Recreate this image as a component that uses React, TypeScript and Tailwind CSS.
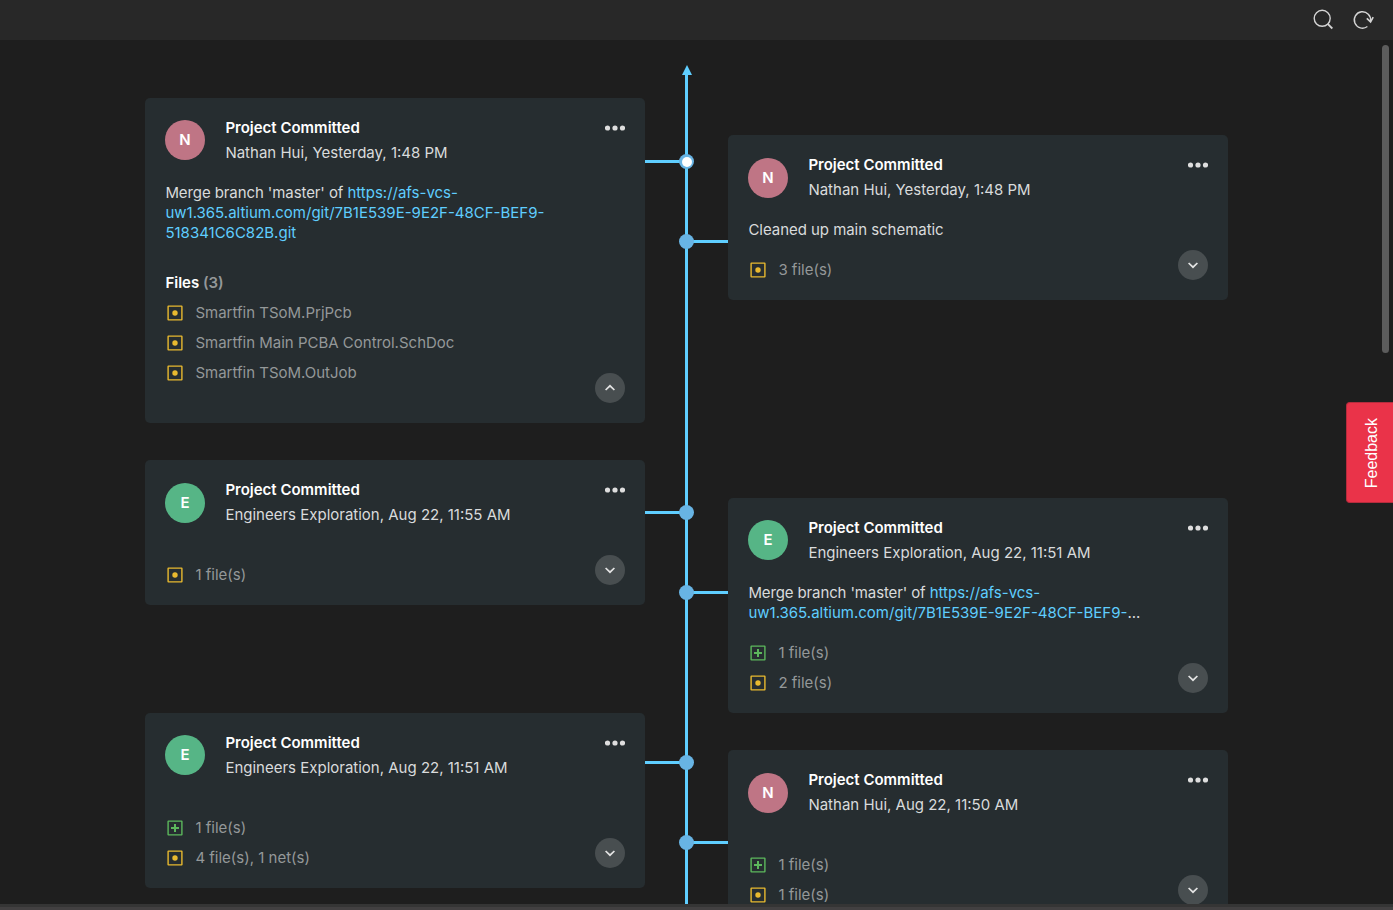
import React from "react";

type Change = { kind: "added" | "modified"; label: string };

type Commit = {
  initial: "N" | "E";
  by: string;
  message?: React.ReactNode;
  changes: Change[];
  expanded?: boolean;
  lowAvatar?: boolean;
};

const Link = ({ children }: { children: React.ReactNode }) => (
  <a className="tracking-normal text-[#5fceff]">{children}</a>
);

const ChangeIcon = ({ kind }: { kind: Change["kind"] }) => (
  <svg
    className={`size-5 shrink-0 ${kind === "added" ? "text-[#5cb85c]" : "text-[#e8b92f]"}`}
    viewBox="0 0 20 20"
    fill="none"
  >
    <rect x="3.1" y="3.1" width="13.8" height="13.8" rx="0.3" stroke="currentColor" strokeWidth="1.4" />
    {kind === "added" ? (
      <path d="M10 6v8M6 10h8" stroke="currentColor" strokeWidth="2" />
    ) : (
      <circle cx="10" cy="10" r="2.7" fill="currentColor" />
    )}
  </svg>
);

const Card = ({ commit }: { commit: Commit }) => (
  <article className="relative shrink-0 rounded-[5px] bg-[#262d30] px-5 text-[#d9dbdc]">
    <header className="flex h-[85px] items-start">
      <div
        className={`flex size-10 items-center justify-center rounded-full font-semibold text-white ${
          commit.lowAvatar ? "mt-[23px]" : "mt-[22px]"
        } ${commit.initial === "N" ? "bg-[#bf7585]" : "bg-[#56b586]"}`}
      >
        {commit.initial}
      </div>
      <div className="ml-[20.4px] mt-[17px] flex-1 leading-[25px]">
        <h2 className="font-semibold text-white">Project Committed</h2>
        <p>{commit.by}</p>
      </div>
      <svg className="mt-[27px] h-[6px] w-5" viewBox="0 0 20 6" fill="#dedede">
        <circle cx="2.5" cy="3" r="2.6" />
        <circle cx="10" cy="3" r="2.6" />
        <circle cx="17.5" cy="3" r="2.6" />
      </svg>
    </header>
    {commit.message && (
      <p className="w-[420px] pl-[0.4px] leading-5 tracking-[-0.04px]">{commit.message}</p>
    )}
    {commit.expanded && (
      <h3 className="mt-[25px] pl-[0.4px] font-semibold leading-[30px] text-white">
        Files <span className="text-[#949899]">({commit.changes.length})</span>
      </h3>
    )}
    <ul className={commit.expanded ? "pb-[35px]" : "pb-[15px] pt-[15px]"}>
      {commit.changes.map((change, i) => (
        <li key={i} className="flex h-[30px] items-center gap-[10.4px] text-[#949899]">
          <ChangeIcon kind={change.kind} />
          <span>{change.label}</span>
        </li>
      ))}
    </ul>
    <button className="absolute bottom-5 right-5 flex size-[30px] items-center justify-center rounded-full bg-[#484e50]">
      <svg className={`size-3 ${commit.expanded ? "rotate-180" : ""}`} viewBox="0 0 12 12" fill="none">
        <path d="M1.6 4 6 8.2 10.4 4" stroke="#e4e4e4" strokeWidth="1.7" />
      </svg>
    </button>
  </article>
);

const Node = ({ side, latest }: { side: "left" | "right"; latest?: boolean }) => (
  <div className="relative flex h-[15px] w-[83px] shrink-0 items-center justify-center">
    <span
      className={`absolute top-[6px] h-[3px] w-[42px] bg-[#5fceff] ${side === "left" ? "left-0" : "right-0"}`}
    />
    <span className="relative flex size-[15px] items-center justify-center rounded-full bg-[#68b4e4]">
      {latest && <span className="size-[10px] rounded-full bg-white" />}
    </span>
  </div>
);

const left: Commit[] = [
  {
    initial: "N",
    by: "Nathan Hui, Yesterday, 1:48 PM",
    message: (
      <>
        <span className="tracking-[-0.09px]">Merge branch 'master' of </span>
        <Link>
          https://afs-vcs-
          <br />
          uw1.365.altium.com/git/7B1E539E-9E2F-48CF-BEF9-
          <br />
          518341C6C82B.git
        </Link>
      </>
    ),
    changes: [
      { kind: "modified", label: "Smartfin TSoM.PrjPcb" },
      { kind: "modified", label: "Smartfin Main PCBA Control.SchDoc" },
      { kind: "modified", label: "Smartfin TSoM.OutJob" },
    ],
    expanded: true,
  },
  {
    initial: "E",
    by: "Engineers Exploration, Aug 22, 11:55 AM",
    changes: [{ kind: "modified", label: "1 file(s)" }],
    lowAvatar: true,
  },
  {
    initial: "E",
    by: "Engineers Exploration, Aug 22, 11:51 AM",
    changes: [
      { kind: "added", label: "1 file(s)" },
      { kind: "modified", label: "4 file(s), 1 net(s)" },
    ],
  },
];

const right: Commit[] = [
  {
    initial: "N",
    by: "Nathan Hui, Yesterday, 1:48 PM",
    message: "Cleaned up main schematic",
    changes: [{ kind: "modified", label: "3 file(s)" }],
    lowAvatar: true,
  },
  {
    initial: "E",
    by: "Engineers Exploration, Aug 22, 11:51 AM",
    message: (
      <>
        <span className="tracking-[-0.12px]">Merge branch 'master' of </span>
        <Link>
          https://afs-vcs-
          <br />
          uw1.365.altium.com/git/7B1E539E-9E2F-48CF-BEF9-
        </Link>
        ...
      </>
    ),
    changes: [
      { kind: "added", label: "1 file(s)" },
      { kind: "modified", label: "2 file(s)" },
    ],
  },
  {
    initial: "N",
    by: "Nathan Hui, Aug 22, 11:50 AM",
    changes: [
      { kind: "added", label: "1 file(s)" },
      { kind: "modified", label: "1 file(s)" },
    ],
    lowAvatar: true,
  },
];

export default function App() {
  return (
    <div className="relative flex h-screen flex-col overflow-hidden bg-[#1e1e1e] font-['Inter',sans-serif] text-[15px]">
      <div className="flex h-10 shrink-0 items-center justify-end gap-[17px] bg-[#282828] pr-[17px]">
        <svg className="size-6" viewBox="0 0 24 24" fill="none" stroke="#d4d4d4" strokeWidth="1.4">
          <circle cx="11.2" cy="10.3" r="8" />
          <path d="m16.7 15.9 4.6 4.6" strokeWidth="1.8" />
        </svg>
        <svg className="size-6" viewBox="0 0 24 24" fill="none" stroke="#d4d4d4" strokeWidth="1.4">
          <path d="M15.4 18.5A8.2 8.2 0 1 1 18.6 13" />
          <path d="m14.8 10.3 3.8 3.6 2.6-4.7" strokeWidth="1.6" />
        </svg>
      </div>

      <main className="flex min-h-0 flex-1 overflow-hidden pl-[145px]">
        <section className="flex w-[500px] shrink-0 flex-col pt-[58px]">
          <Card commit={left[0]} />
          <div className="h-[37px] shrink-0" />
          <Card commit={left[1]} />
          <div className="h-[108px] shrink-0" />
          <Card commit={left[2]} />
        </section>

        <div className="relative flex w-[83px] shrink-0 flex-col pt-[114px]">
          <svg className="absolute left-[36px] top-[25px] h-[10px] w-[12px]" viewBox="0 0 12 10" fill="#5fceff">
            <path d="M6 0 11 10H1z" />
          </svg>
          <span className="absolute bottom-0 left-[40px] top-[34px] w-[3px] bg-[#5fceff]" />
          <Node side="left" latest />
          <div className="h-[65px] shrink-0" />
          <Node side="right" />
          <div className="h-[256px] shrink-0" />
          <Node side="left" />
          <div className="h-[65px] shrink-0" />
          <Node side="right" />
          <div className="h-[155px] shrink-0" />
          <Node side="left" />
          <div className="h-[65px] shrink-0" />
          <Node side="right" />
        </div>

        <section className="flex w-[500px] shrink-0 flex-col pt-[95px]">
          <Card commit={right[0]} />
          <div className="h-[198px] shrink-0" />
          <Card commit={right[1]} />
          <div className="h-[37px] shrink-0" />
          <Card commit={right[2]} />
        </section>
      </main>

      <div className="h-[6px] shrink-0 border-t-[3px] border-[#353535] bg-[#424041]" />

      <div className="absolute right-1 top-[45px] h-[308px] w-[7px] rounded-full bg-[#5c5c5c]" />
      <button className="absolute right-0 top-[402px] flex h-[101px] w-[47px] items-center justify-center rounded-l-[4px] border border-r-0 border-[#b52c3d] bg-[#ea3349] pl-[4px] pt-[2px] font-['Liberation_Sans',Arial,sans-serif] text-base text-white">
        <span className="rotate-180 [writing-mode:vertical-rl]">Feedback</span>
      </button>
    </div>
  );
}
